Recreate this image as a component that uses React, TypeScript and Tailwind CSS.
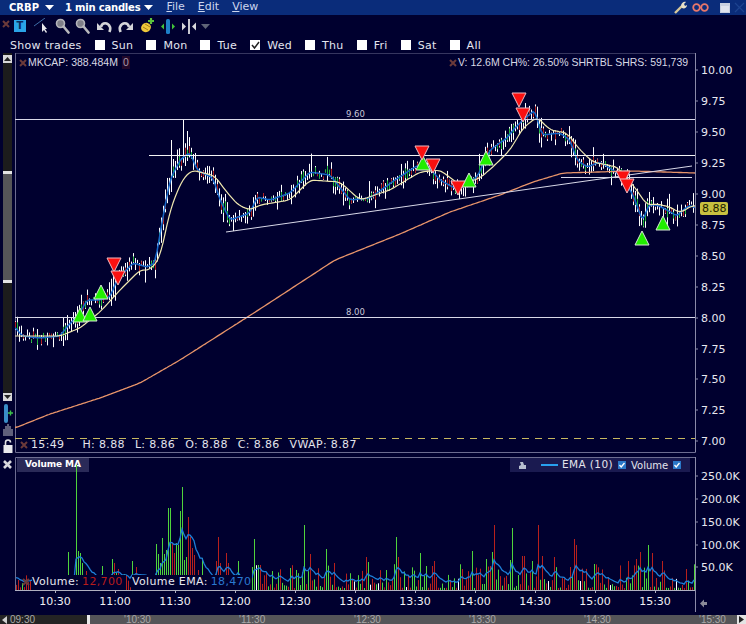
import type { ReactNode } from "react";

type Pt = [number, number];

const pricePath: Pt[] = [
  [15, 327], [22, 336], [40, 338], [60, 336], [67, 327], [80, 313], [87, 300], [100, 300], [110, 297],
  [117, 280], [133, 263], [147, 267], [155, 263], [163, 217], [170, 180], [180, 160], [190, 152], [197, 170],
  [213, 178], [220, 200], [230, 220], [250, 213], [257, 197], [270, 200], [290, 193], [310, 172], [330, 175],
  [350, 200], [370, 198], [395, 180], [415, 167], [425, 163], [440, 180], [458, 190], [470, 182], [477, 177],
  [490, 150], [507, 138], [513, 130], [523, 120], [535, 110], [540, 130], [543, 135], [560, 133], [570, 140],
  [577, 160], [587, 167], [600, 162], [613, 170], [623, 178], [633, 195], [643, 222], [648, 205], [657, 205],
  [667, 210], [677, 216], [683, 210], [690, 205], [695, 208],
];

const yellowPath: Pt[] = [
  [15, 336], [60, 336], [80, 328], [100, 312], [120, 290], [140, 270], [150, 270], [160, 258], [170, 210],
  [182, 180], [192, 170], [215, 176], [225, 190], [238, 205], [250, 210], [260, 205], [290, 200], [310, 180],
  [340, 182], [360, 200], [390, 190], [420, 172], [440, 170], [460, 185], [480, 178], [495, 165], [510, 150],
  [523, 128], [537, 117], [550, 130], [567, 133], [580, 150], [593, 162], [617, 167], [633, 185], [647, 205],
  [657, 204], [670, 207], [680, 213], [693, 205], [695, 206],
];

const orangePath: Pt[] = [
  [15, 428], [50, 414], [100, 398], [140, 383], [180, 360], [260, 309], [335, 260], [400, 234], [450, 212],
  [500, 195], [533, 182], [563, 173], [633, 171], [695, 173],
];

// x, top of bar, colour (g / r) read off the reference; everything else is filler
const bigVolume: [number, number, string][] = [
  [68, 552, "g"], [76, 465, "g"], [78, 551, "g"], [80, 553, "g"], [82, 563, "g"], [86, 571, "r"], [102, 566, "g"],
  [112, 559, "g"], [114, 563, "r"], [116, 573, "g"], [118, 569, "r"], [124, 574, "g"], [126, 576, "r"], [132, 561, "g"],
  [136, 567, "r"], [156, 544, "g"], [158, 554, "g"], [160, 563, "g"], [162, 538, "g"], [164, 554, "g"], [166, 550, "g"],
  [168, 508, "g"], [170, 508, "g"], [172, 543, "r"], [174, 553, "r"], [176, 543, "g"], [178, 545, "g"], [180, 511, "g"],
  [182, 487, "g"], [184, 560, "g"], [186, 557, "g"], [188, 517, "r"], [190, 537, "r"], [192, 548, "r"], [194, 555, "r"],
  [198, 570, "r"], [202, 558, "g"], [216, 561, "r"], [218, 537, "r"], [220, 563, "r"], [226, 553, "r"], [228, 563, "r"],
  [238, 561, "g"], [252, 567, "g"], [254, 539, "g"], [260, 565, "r"], [266, 572, "r"], [290, 568, "g"], [304, 525, "g"],
  [310, 554, "r"], [326, 549, "g"], [334, 563, "r"], [366, 557, "r"], [368, 562, "g"], [396, 537, "g"], [398, 557, "r"],
  [420, 553, "g"], [432, 566, "r"], [434, 561, "r"], [472, 551, "g"], [486, 559, "g"], [492, 552, "g"], [494, 525, "r"],
  [510, 560, "g"], [512, 528, "g"], [522, 556, "r"], [524, 556, "r"], [532, 561, "g"], [538, 525, "r"], [542, 556, "r"],
  [554, 557, "r"], [570, 567, "r"], [574, 539, "r"], [576, 545, "r"], [594, 564, "g"], [628, 561, "r"], [636, 559, "r"],
  [640, 552, "r"], [648, 545, "g"], [652, 553, "r"], [662, 561, "r"], [686, 569, "r"],
];

function rng(seed: number) {
  let s = seed;
  return () => {
    s = (s * 1664525 + 1013904223) % 4294967296;
    return s / 4294967296;
  };
}

function at(path: Pt[], x: number) {
  for (let i = 1; i < path.length; i++) {
    if (x <= path[i][0]) {
      const [x0, y0] = path[i - 1];
      const [x1, y1] = path[i];
      return y0 + ((y1 - y0) * (x - x0)) / (x1 - x0);
    }
  }
  return path[path.length - 1][1];
}

function smoothLine(path: Pt[], radius: number) {
  const out: string[] = [];
  for (let x = 15; x <= 695; x += 2) {
    let sum = 0;
    let n = 0;
    for (let d = -radius; d <= radius; d += 2) {
      const px = Math.min(695, Math.max(15, x + d));
      sum += at(path, px);
      n++;
    }
    out.push(`${x},${(sum / n).toFixed(1)}`);
  }
  return out.join(" ");
}

function makeCandles() {
  const r = rng(42);
  const list: { x: number; hi: number; lo: number; bodyTop: number; bodyBot: number; color: string }[] = [];
  for (let x = 15; x < 695; x += 2) {
    const c = at(pricePath, x) + (r() - 0.5) * 8;
    const slope = Math.abs(at(pricePath, x + 4) - at(pricePath, x - 4)) / 8;
    const big = r();
    const span = Math.min(15, 1 + slope * 6 + big * big * big * 13);
    const coin = r();
    const color = coin < 0.3 ? "#22b83a" : coin < 0.6 ? "#b02020" : "#ffffff";
    let hi = c - span * (0.3 + r() * 0.7);
    const lo = c + span * (0.3 + r() * 0.7);
    if (x === 183) hi = 120;
    if (x === 171) hi = 140;
    if (x === 187) hi = 131;
    list.push({ x, hi, lo, bodyTop: c - 1 - span * 0.25, bodyBot: c + 1 + span * 0.25, color });
  }
  return list;
}

function makeVolume() {
  const r = rng(7);
  const big = new Map(bigVolume.map(([x, top, c]) => [x, { top, c }]));
  const bars: { x: number; top: number; color: string }[] = [];
  let ema = 14;
  const line: string[] = [];
  for (let x = 16; x < 695; x += 2) {
    const hit = big.get(x);
    const n = r();
    const h = hit ? 590 - hit.top : x < 250 ? n * 13 + 2 : n * n * 24 + 2;
    const coin = r();
    const color = hit
      ? hit.c === "g" ? "#4fd43c" : "#b8201c"
      : coin < 0.05 ? "#ffffff" : coin < 0.45 ? "#4fd43c" : "#b8201c";
    bars.push({ x, top: 590 - h, color });
    ema = ema + (h - ema) * (2 / 11);
    line.push(`${x},${(590 - ema).toFixed(1)}`);
  }
  return { bars, line: line.join(" ") };
}

const candles = makeCandles();
const volume = makeVolume();

const greens: Pt[] = [[80, 315], [90, 314], [101, 292], [423, 163], [469, 180], [486, 158], [642, 238], [663, 223]];
const reds: Pt[] = [[114, 265], [118, 278], [422, 153], [433, 166], [458, 188], [519, 100], [523, 115], [623, 178], [627, 186]];

const priceTicks: [string, number][] = [
  ["10.00", 70], ["9.75", 101], ["9.50", 132], ["9.25", 163], ["9.00", 194], ["8.75", 225], ["8.50", 256],
  ["8.25", 287], ["8.00", 318], ["7.75", 349], ["7.50", 379], ["7.25", 410], ["7.00", 441],
];
const volumeTicks: [string, number][] = [["250.0K", 476], ["200.0K", 499], ["150.0K", 522], ["100.0K", 545], ["50.0K", 567]];
const timeLabels = ["10:30", "11:00", "11:30", "12:00", "12:30", "13:00", "13:30", "14:00", "14:30", "15:00", "15:30"];

const days = ["Sun", "Mon", "Tue", "Wed", "Thu", "Fri", "Sat", "All"];
const scrollLabels = ["'10:30", "'11:30", "'12:30", "'13:30", "'14:30"];

function Caret({ className }: { className: string }) {
  return (
    <svg width="9" height="5" viewBox="0 0 9 5" className={className}>
      <path d="M0 0h9L4.5 5z" fill="currentColor" />
    </svg>
  );
}

function SmallX({ className = "" }: { className?: string }) {
  return (
    <svg width="8" height="8" viewBox="0 0 8 8" className={className}>
      <path d="M1 1l6 6M7 1L1 7" stroke="#6b3a3a" strokeWidth="2" />
    </svg>
  );
}

function Magnifier() {
  return (
    <svg width="15" height="16" viewBox="0 0 15 16">
      <circle cx="5.5" cy="5.5" r="4" fill="#7f7f88" stroke="#b4b4ba" strokeWidth="1.6" />
      <path d="M8.5 8.5l5 6" stroke="#b8b8bc" strokeWidth="2.6" strokeLinecap="round" />
    </svg>
  );
}

function Toolbar() {
  return (
    <div className="flex h-[22px] items-center">
      <SmallX className="ml-[2px] mb-[4px]" />
      <div className="ml-[4px] flex h-[12px] w-[12px] items-center justify-center bg-[#2aa4e8] text-[10px] font-bold leading-none text-[#0a2a60]">
        T
      </div>
      <svg width="14" height="16" viewBox="0 0 14 16" className="ml-[8px]">
        <path d="M0 8L11 0" stroke="#3d6ea8" strokeWidth="1" />
        <path d="M8 5v9l2-2 2 3 1-1-2-3h2z" fill="#e8e8ec" />
      </svg>
      <div className="ml-[7px]"><Magnifier /></div>
      <div className="ml-[5px]"><Magnifier /></div>
      <svg width="15" height="13" viewBox="0 0 15 13" className="ml-[7px]">
        <path d="M4 7C5 2 11 2 13 7c.5 1.500.3 3-.6 5" fill="none" stroke="#d4d4d8" strokeWidth="2.600" />
        <path d="M0 3l7 7H0z" fill="#d4d4d8" />
      </svg>
      <svg width="15" height="13" viewBox="0 0 15 13" className="ml-[6px]">
        <path d="M11 7C10 2 4 2 2 7c-.5 1.500-.3 3 .6 5" fill="none" stroke="#d4d4d8" strokeWidth="2.600" />
        <path d="M15 3l-7 7h7z" fill="#d4d4d8" />
      </svg>
      <svg width="15" height="15" viewBox="0 0 15 15" className="ml-[7px] mb-[2px]">
        <ellipse cx="6" cy="9.500" rx="5" ry="4.500" fill="#efc93a" transform="rotate(-30 6 9.500)" />
        <path d="M3 9l5 3M5 6l5 3" stroke="#a8801c" strokeWidth="1" />
        <path d="M11 0v6M8 3h6" stroke="#5cc23c" strokeWidth="2.200" />
      </svg>
      <svg width="14" height="15" viewBox="0 0 14 15" className="ml-[6px]">
        <path d="M0 7.500l3-3v6z" fill="#42c43a" />
        <path d="M14 7.500l-3-3v6z" fill="#42c43a" />
        <rect x="5" y="0" width="4" height="15" rx="1.500" fill="#1d7fc8" />
      </svg>
      <svg width="14" height="15" viewBox="0 0 14 15" className="ml-[7px]">
        <path d="M0 3.500l4 4-4 4z" fill="#d8d8dc" />
        <path d="M14 3.500l-4 4 4 4z" fill="#d8d8dc" />
        <rect x="6" y="0" width="2" height="15" fill="#c8c8d0" />
      </svg>
      <Caret className="ml-[5px] text-[#5f6478]" />
    </div>
  );
}

function TitleBar() {
  return (
    <div className="flex h-[15px] items-center bg-[#0a2c7a] text-[11px] text-[#cdd6ee]">
      <span className="ml-[9px] text-[10px] font-bold text-white">CRBP</span>
      <Caret className="ml-[6px] text-white" />
      <span className="ml-[11px] text-[10px] font-bold tracking-[-0.2px] text-white">1 min candles</span>
      <Caret className="ml-[4px] text-white" />
      <span className="ml-[13px]"><u>F</u>ile</span>
      <span className="ml-[13px]"><u>E</u>dit</span>
      <span className="ml-[13px]"><u>V</u>iew</span>
      <div className="ml-auto flex items-center">
        <svg width="13" height="13" viewBox="0 0 13 13">
          <path d="M1 12l7-7" stroke="#d8c89a" strokeWidth="2.400" />
          <path d="M7 5c0-3 3-5 5-4l-2 2 1 2 2-1c0 3-3 4-5 3z" fill="#e8e0c8" />
        </svg>
        <svg width="17" height="9" viewBox="0 0 17 9" className="ml-[5px]">
          <circle cx="4.500" cy="4.500" r="3.300" fill="none" stroke="#e8776a" strokeWidth="1.800" />
          <circle cx="12.500" cy="4.500" r="3.300" fill="none" stroke="#e8776a" strokeWidth="1.800" />
          <path d="M7 4.500h3" stroke="#e8776a" strokeWidth="1.500" />
        </svg>
        <div className="ml-[11px] h-[10px] w-[10px] border border-[#c8d0e0] border-t-[3px] bg-[#dfe4ee]" />
        <svg width="11" height="11" viewBox="0 0 11 11" className="ml-[4px] mr-[1px]">
          <path d="M1 1l9 9M10 1l-9 9" stroke="#1c4390" strokeWidth="1.200" />
        </svg>
      </div>
    </div>
  );
}

function ShowTrades() {
  return (
    <div className="flex h-[16px] items-center pl-[10px] text-[11px] leading-none tracking-[0.3px] text-[#e4e6f0]">
      <span className="mr-[13px]">Show trades</span>
      <div className="flex items-center gap-[13px]">
        {days.map((d) => (
          <div key={d} className="flex items-center gap-[7px]">
            <div className="flex h-[10px] w-[10px] items-center justify-center bg-white">
              {d === "Wed" && (
                <svg width="9" height="9" viewBox="0 0 9 9">
                  <path d="M1 4l2.500 3L8 1" fill="none" stroke="#222" strokeWidth="1.500" />
                </svg>
              )}
            </div>
            <span>{d}</span>
          </div>
        ))}
      </div>
    </div>
  );
}

function GutterButton({ up }: { up: boolean }) {
  return (
    <div className="flex h-[8px] w-[9px] items-center justify-center bg-[#d8d8d8]">
      <svg width="7" height="4" viewBox="0 0 7 4">
        <path d={up ? "M3.500 0L7 4H0z" : "M0 0h7L3.500 4z"} fill="#222" />
      </svg>
    </div>
  );
}

function PriceGutter() {
  return (
    <div className="flex h-[400px] w-[15px] flex-col pl-[3px]">
      <div className="flex h-[348px] w-[9px] flex-col bg-[#1c1c1c] pt-[2px]">
        <GutterButton up />
        <div className="mt-[108px] flex h-[112px] w-[9px] flex-col justify-between border-y-[3px] border-[#e4e4e4] bg-[#555558]" />
        <div className="flex-1" />
        <GutterButton up={false} />
      </div>
      <svg width="10" height="19" viewBox="0 0 10 19" className="mt-[3px]">
        <rect x="1" y="0" width="4" height="19" rx="2" fill="#3a8ec8" />
        <path d="M5 9h5M7.500 6.500v5" stroke="#3cc24a" strokeWidth="1.400" />
      </svg>
      <svg width="10" height="12" viewBox="0 0 10 12" className="mt-[1px]">
        <path d="M1 5v7M3 2v10M5 0v12M7 2v10M9 5v7" stroke="#c0c0c8" strokeWidth="1" />
      </svg>
      <svg width="10" height="14" viewBox="0 0 10 14" className="mt-[3px]">
        <path d="M2.500 6V3.500a2.500 2.500 0 0 1 5 0" fill="none" stroke="#e0e0e4" strokeWidth="1.600" />
        <rect x="0.500" y="6" width="9" height="8" fill="#e8e8ec" />
      </svg>
    </div>
  );
}

function PriceChart() {
  return (
    <svg width="731" height="400" viewBox="15 53 731 400" className="absolute left-0 top-0">
      <path d="M15.500 53v399.500H695.500V53H15.500" fill="none" stroke="#6c6c90" />
      <line x1="15" x2="695" y1="438.500" y2="438.500" stroke="#c8b860" strokeDasharray="7 6" />
      {candles.map((c) => (
        <g key={c.x}>
          <line x1={c.x + 0.5} x2={c.x + 0.5} y1={c.hi} y2={c.lo} stroke="#ffffff" />
          <line x1={c.x + 0.5} x2={c.x + 0.5} y1={c.bodyTop} y2={c.bodyBot} stroke={c.color} />
        </g>
      ))}
      <polyline points={smoothLine(pricePath, 2)} fill="none" stroke="#1667c8" strokeWidth="1.500" />
      <polyline points={smoothLine(yellowPath, 4)} fill="none" stroke="#f0e8b0" strokeWidth="1.200" />
      <polyline points={smoothLine(orangePath, 4)} fill="none" stroke="#e8946a" strokeWidth="1.300" />
      <line x1="15" x2="695" y1="119.500" y2="119.500" stroke="#d8d8e8" />
      <line x1="149" x2="695" y1="155.500" y2="155.500" stroke="#f4f4f4" />
      <line x1="15" x2="695" y1="317.500" y2="317.500" stroke="#d8d8e8" />
      <line x1="226" x2="692" y1="232" y2="166" stroke="#d8d8e8" />
      <line x1="561" x2="692" y1="177.500" y2="177.500" stroke="#d8d8e8" />
      <text x="346" y="117" fontSize="8.500" fill="#c8c8d8">9.60</text>
      <text x="346" y="315" fontSize="8.500" fill="#c8c8d8">8.00</text>
      {greens.map(([x, y]) => (
        <polygon key={`g${x}`} points={`${x},${y - 7} ${x + 7},${y + 7} ${x - 7},${y + 7}`} fill="#22ee00" stroke="#d8e8d8" strokeWidth="1" />
      ))}
      {reds.map(([x, y]) => (
        <polygon key={`r${x}`} points={`${x - 7},${y - 7} ${x + 7},${y - 7} ${x},${y + 7}`} fill="#fa1010" stroke="#f0b8c0" strokeWidth="1" />
      ))}
      <line x1="695.500" x2="695.500" y1="53" y2="452" stroke="#8a8aa8" />
      {priceTicks.map(([label, y]) => (
        <g key={label}>
          <line x1="695" x2="698" y1={y} y2={y} stroke="#8a8aa8" />
          <text x="701" y={y + 4} fontSize="11" fill="#e8e8f0">{label}</text>
        </g>
      ))}
      <rect x="700" y="202" width="28" height="13" rx="2" fill="#c8c040" />
      <text x="702" y="212" fontSize="11" fill="#222200">8.88</text>
    </svg>
  );
}

function VolumeChart() {
  return (
    <svg width="731" height="158" viewBox="15 457 731 158" className="relative block">
      <path d="M15.500 590V457.500H695.500" fill="none" stroke="#6c6c90" />
      <line x1="15" x2="695" y1="590.500" y2="590.500" stroke="#b0b0c0" />
      {volume.bars.map((b) => (
        <line key={b.x} x1={b.x + 0.5} x2={b.x + 0.5} y1={b.top} y2="590" stroke={b.color} />
      ))}
      <polyline points={volume.line} fill="none" stroke="#1d7fd8" strokeWidth="1.300" />
      <line x1="695.500" x2="695.500" y1="457" y2="612" stroke="#8a8aa8" />
      {volumeTicks.map(([label, y]) => (
        <g key={label}>
          <line x1="695" x2="698" y1={y} y2={y} stroke="#8a8aa8" />
          <text x="701" y={y + 4} fontSize="11" fill="#e8e8f0">{label}</text>
        </g>
      ))}
      {timeLabels.map((t, i) => (
        <g key={t}>
          <line x1={55.500 + i * 60} x2={55.500 + i * 60} y1="590" y2="593" stroke="#b0b0c0" />
          <text x={55 + i * 60} y="605" fontSize="11" fill="#f0f0f4" textAnchor="middle">{t}</text>
        </g>
      ))}
      <path d="M700 603.500l4-4v2.500h3v3h-3v2.500z" fill="#8a8a98" />
    </svg>
  );
}

function Legend({ children, className }: { children: ReactNode; className: string }) {
  return <div className={`absolute flex items-center ${className}`}>{children}</div>;
}

function BlueCheck() {
  return (
    <div className="flex h-[8px] w-[8px] items-center justify-center bg-[#2a78c8]">
      <svg width="6" height="6" viewBox="0 0 6 6">
        <path d="M0.500 3l1.700 2L5.500 1" fill="none" stroke="#fff" strokeWidth="1.300" />
      </svg>
    </div>
  );
}

export default function App() {
  return (
    <div className="flex h-[624px] w-[746px] flex-col overflow-hidden bg-[#00002f] font-['DejaVu_Sans',sans-serif]">
      <TitleBar />
      <Toolbar />
      <ShowTrades />

      <div className="flex h-[400px]">
        <PriceGutter />
        <div className="relative h-[400px] w-[731px]">
          <PriceChart />
          <Legend className="left-[4px] top-[3px] font-['Liberation_Sans',sans-serif] text-[10.500px] leading-[13px] text-[#d8d8e4]">
            <SmallX className="mr-[1px]" />
            <span>MKCAP: 388.484M</span>
            <span className="ml-[4px] bg-[#22082a] px-[1px] text-[#a898a8]">0</span>
          </Legend>
          <Legend className="left-[434px] top-[3px] font-['Liberation_Sans',sans-serif] text-[10.500px] leading-[13px] text-[#d8d8e4]">
            <SmallX className="mr-[1px]" />
            <span>V: 12.6M CH%: 26.50% SHRTBL SHRS: 591,739</span>
          </Legend>
          <Legend className="left-[5px] top-[385px] text-[11px] leading-[13px] tracking-[0.35px] text-[#e4e4ec]">
            <SmallX className="mr-[3px]" />
            <span>15:49</span>
            <span className="ml-[18px]">H: 8.88</span>
            <span className="ml-[10px]">L: 8.86</span>
            <span className="ml-[10px]">O: 8.88</span>
            <span className="ml-[10px]">C: 8.86</span>
            <span className="ml-[10px]">VWAP: 8.87</span>
          </Legend>
        </div>
      </div>

      <div className="mt-[4px] flex h-[158px]">
        <div className="w-[15px] pl-[3px] pt-[3px]">
          <svg width="9" height="9" viewBox="0 0 9 9">
            <path d="M1 1l7 7M8 1L1 8" stroke="#d8d8dc" strokeWidth="2.600" />
          </svg>
        </div>
        <div className="relative h-[158px] w-[731px]">
          <div className="absolute left-[2px] top-[1px] flex h-[14px] w-[72px] items-center bg-[#2a2a58] pl-[8px] text-[9px] font-bold tracking-[-0.1px] text-white">
            Volume MA
          </div>
          <VolumeChart />
          <Legend className="left-[495px] top-[1px] h-[14px] w-[180px] bg-[#1a1a50] text-[10.500px] text-[#e4e4ec]">
            <svg width="9" height="9" viewBox="0 0 9 9" className="ml-[8px]">
              <path d="M2 1h3l1 3h2v4H1V5l2-1z" fill="#b8c0d0" />
            </svg>
            <div className="ml-[14px] h-[2px] w-[17px] bg-[#28a0ee]" />
            <span className="ml-[4px] tracking-[0.4px]">EMA (10)</span>
            <div className="ml-[5px]"><BlueCheck /></div>
            <span className="ml-[5px] text-[10px]">Volume</span>
            <div className="ml-[5px]"><BlueCheck /></div>
          </Legend>
          <Legend className="left-[17px] top-[118px] h-[15px] bg-[#00002f] pr-[3px] text-[11px] tracking-[0.35px] text-[#e8e8f0]">
            <span>Volume: </span>
            <span className="ml-[3px] text-[#b81c1c]">12,700</span>
          </Legend>
          <Legend className="left-[117px] top-[118px] h-[15px] bg-[#00002f] pr-[1px] text-[11px] tracking-[0.35px] text-[#e8e8f0]">
            <span>Volume EMA: </span>
            <span className="ml-[3px] text-[#2a78d0]">18,470</span>
          </Legend>
          <SmallX className="absolute left-[7px] top-[121px]" />
        </div>
      </div>

      <div className="flex h-[9px] flex-1 items-center overflow-hidden font-['Liberation_Sans',sans-serif] text-[10px] leading-none text-[#a8a8a8]">
        <div className="flex h-full w-[87px] items-center bg-[#242424]">
          <svg width="8" height="8" viewBox="0 0 8 8" className="ml-[1px]">
            <path d="M1 4l5-4v8z" fill="#d0d0d0" />
          </svg>
          <span className="ml-[1px]">09:30</span>
        </div>
        <div className="h-full w-[3px] bg-[#e8e8e8]" />
        <div className="flex h-full flex-1 items-center bg-[#555558] pl-[34px]">
          {scrollLabels.map((s) => (
            <span key={s} className="w-[115px]">{s}</span>
          ))}
          <span>'15:30</span>
          <div className="ml-auto flex h-full w-[9px] items-center justify-center bg-[#e4e4e4]">
            <svg width="5" height="7" viewBox="0 0 5 7">
              <path d="M0 0l5 3.500L0 7z" fill="#222" />
            </svg>
          </div>
        </div>
      </div>
    </div>
  );
}
